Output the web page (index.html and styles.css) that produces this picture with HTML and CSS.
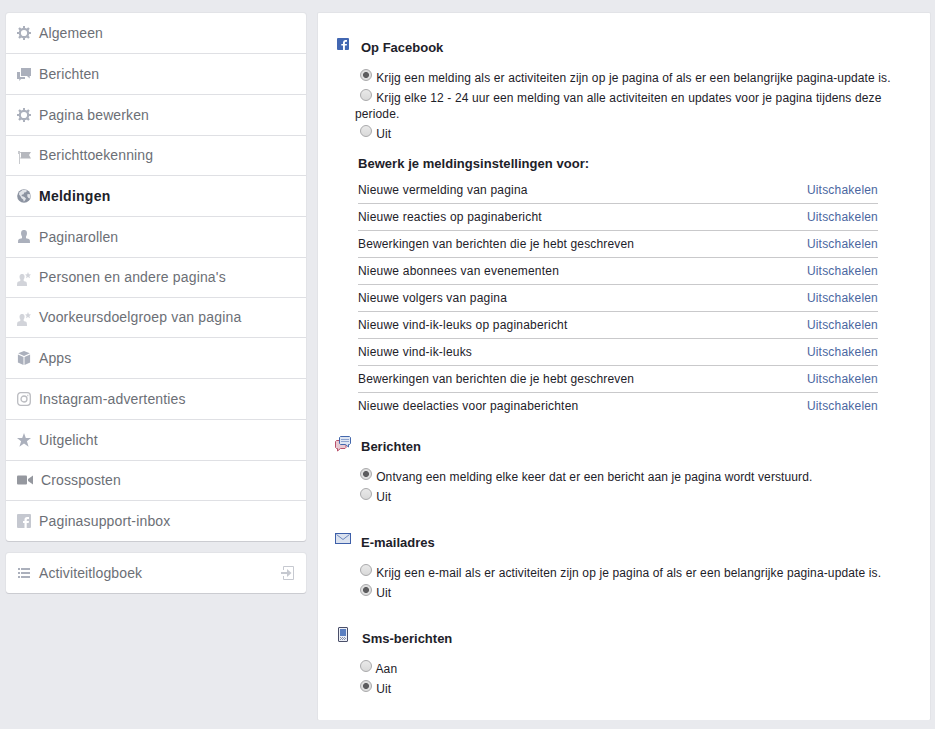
FILE: index.html
```html
<!DOCTYPE html>
<html lang="nl">
<head>
    <meta charset="UTF-8">
    <meta name="viewport" content="width=device-width, initial-scale=1.0">
    <title>Instellingen - Meldingen</title>
    <link rel="stylesheet" href="styles.css">
</head>
<body>
    <!-- shared icon shapes -->
    <svg class="sprite">
        <symbol id="gear" viewBox="0 0 14 14">
            <circle cx="7" cy="7" r="4.2" fill="none" stroke="currentColor" stroke-width="2.2"/>
            <path d="M6 0h2v2.5H6zM6 11.5h2V14H6zM0 6h2.5v2H0zM11.5 6H14v2h-2.5zM1.2 2.8l1.6-1.6 1.9 1.7L2.9 4.7zM12.8 2.8l-1.6-1.6L9.3 2.9 11.1 4.7zM1.2 11.2l1.6 1.6L4.7 11.1 2.9 9.3zM12.8 11.2l-1.6 1.6L9.3 11.1 11.1 9.3z"/>
        </symbol>
        <symbol id="person-star" viewBox="0 0 14 14">
            <path d="M4.200 2H6q1.600.5 1.600 2.500T6.700 7.300v1.800l2.400.7Q10 10.200 10 14H0q0-3.800.9-4.200l2.400-.7V7.300Q2.500 6.500 2.500 4.500T4.200 2z"/>
            <path d="M11 0l.9 2.300 2.100.1-1.600 1.500.6 2.300-2-1.300-2 1.300.6-2.300L8 2.400l2.100-.1z"/>
        </symbol>
    </svg>

    <div class="page">
        <div class="sidebar">
            <ul class="card menu">
                <li><svg class="icon" viewBox="0 0 14 14"><use href="#gear"/></svg>Algemeen</li>
                <li>
                    <svg class="icon" viewBox="0 0 14 14"><path d="M4 1h10v8h-1.300v2.500L10 9H4z"/><path d="M0 5h3v5h5v2H4l-1.700 2v-2H0z"/></svg>
                    Berichten
                </li>
                <li><svg class="icon" viewBox="0 0 14 14"><use href="#gear"/></svg>Pagina bewerken</li>
                <li class="short">
                    <svg class="icon flag" viewBox="0 0 14 14"><path d="M4 2h10l-2 3 2 3.500H4z"/><path d="M1 1h2v13H2V4H1zM3 2h1v1H3zM3 7.500h1v1H3z" opacity=".75"/></svg>
                    Berichttoekenning
                </li>
                <li class="active">
                    <svg class="icon" viewBox="0 0 14 14"><circle cx="7" cy="7" r="6.800"/><path class="land" d="M5.500 1l2.700-.3 2 1.100-1.400 1.500-1.600.3-.6 1.700-1.800.5-.2 1.300 2.500.6 1.900 1.800-.9 1.700-1.300 1.500-.6-2.100-1.700-1.400-1-2L2 5.500 2.200 3.600zM10.500 5l2.500.2.500 1.900-.6 2.400-1.500-.6-1.200-1.600z"/></svg>
                    Meldingen
                </li>
                <li>
                    <svg class="icon" viewBox="0 0 14 14"><path d="M6 0h2q2 .5 2 3.100Q10 5.300 9 6.400v1.800l3 .9q1.200.7 1 3.900H1q-.2-3.200 1-3.900l3-.9V6.400Q4 5.300 4 3.100 4 .5 6 0z"/></svg>
                    Paginarollen
                </li>
                <li class="short wide"><svg class="icon faded" viewBox="0 0 14 14"><use href="#person-star"/></svg>Personen en andere pagina's</li>
                <li class="short wide"><svg class="icon faded" viewBox="0 0 14 14"><use href="#person-star"/></svg>Voorkeursdoelgroep van pagina</li>
                <li>
                    <svg class="icon" viewBox="0 0 14 14"><path d="M7 0l5.800 2.300L7 5 1.200 2.300zM.9 3.400l5.600 2.500V14L.9 11.500zM13.100 3.400L7.500 5.900V14l5.600-2.500z"/></svg>
                    Apps
                </li>
                <li class="wide">
                    <svg class="icon line" viewBox="0 0 14 14"><rect x=".7" y=".7" width="12.600" height="12.600" rx="3"/><circle cx="7" cy="7" r="3"/><path d="M10.300 3.500h1"/></svg>
                    Instagram-advertenties
                </li>
                <li>
                    <svg class="icon" viewBox="0 0 14 14"><path d="M7 0l1.800 5H14L9.900 8.300l1.700 5.400L7 10.600l-4.600 3.100 1.700-5.400L0 5h5.200z"/></svg>
                    Uitgelicht
                </li>
                <li class="short">
                    <svg class="icon video" viewBox="0 0 16 14"><rect y="2.500" width="10" height="9" rx="1"/><path d="M16 2.500v9L11 8V6z"/></svg>
                    Crossposten
                </li>
                <li class="wide">
                    <svg class="icon fb" viewBox="0 0 14 14"><rect width="14" height="14" rx="1"/><path class="cut" d="M7.500 14V9H6V7h1.500V5.500Q7.500 3 10 3h2v2h-1.300q-1 0-1 1v1H12l-.3 2h-2v5z"/></svg>
                    Paginasupport-inbox
                </li>
            </ul>
            <ul class="card menu">
                <li>
                    <svg class="icon" viewBox="0 0 14 14"><path d="M1 2h2v2H1zM4 2h9v2H4zM1 6h2v2H1zM4 6h9v2H4zM1 10h2v2H1zM4 10h9v2H4z"/></svg>
                    Activiteitlogboek
                    <svg class="exit" viewBox="0 0 14 14"><path d="M2.500 4V.5h10v13h-10V10" fill="none" stroke="currentColor"/><path d="M0 6h6V3l4.500 4L6 11V8H0z"/></svg>
                </li>
            </ul>
        </div>

        <div class="card content">
            <div class="section">
                <div class="heading">
                    <svg width="12" height="12" viewBox="0 0 12 12"><rect width="12" height="12" rx="1" fill="#4267b2"/><path d="M6 12V7.500H4.300V6H6V4.500Q6 2 8.300 2H10v1.700H9q-1.100 0-1.100 1V6H10l-.3 1.500H7.900V12z" fill="#fff"/></svg>
                    <h3>Op Facebook</h3>
                </div>
                <div class="options">
                    <div><input type="radio" name="facebook" checked> Krijg een melding als er activiteiten zijn op je pagina of als er een belangrijke pagina-update is.</div>
                    <div><input type="radio" name="facebook"> Krijg elke 12 - 24 uur een melding van alle activiteiten en updates voor je pagina tijdens deze<br>periode.</div>
                    <div><input type="radio" name="facebook"> Uit</div>
                </div>
                <div class="settings">
                    <h4>Bewerk je meldingsinstellingen voor:</h4>
                    <div class="row"><span>Nieuwe vermelding van pagina</span><a>Uitschakelen</a></div>
                    <div class="row"><span>Nieuwe reacties op paginabericht</span><a>Uitschakelen</a></div>
                    <div class="row"><span class="tight">Bewerkingen van berichten die je hebt geschreven</span><a>Uitschakelen</a></div>
                    <div class="row"><span>Nieuwe abonnees van evenementen</span><a>Uitschakelen</a></div>
                    <div class="row"><span>Nieuwe volgers van pagina</span><a>Uitschakelen</a></div>
                    <div class="row"><span>Nieuwe vind-ik-leuks op paginabericht</span><a>Uitschakelen</a></div>
                    <div class="row"><span>Nieuwe vind-ik-leuks</span><a>Uitschakelen</a></div>
                    <div class="row"><span class="tight">Bewerkingen van berichten die je hebt geschreven</span><a>Uitschakelen</a></div>
                    <div class="row"><span>Nieuwe deelacties voor paginaberichten</span><a>Uitschakelen</a></div>
                </div>
            </div>

            <div class="section">
                <div class="heading messages">
                    <svg width="16" height="16" viewBox="0 0 16 16">
                        <path d="M1.500 4.500l-1 1v6l1 1h1v2.500l3-2.500H10l1-1v-7z" fill="#e8c9d2" stroke="#b8506a"/>
                        <path d="M5.500.5h9l1 1v6l-1 1h-1v2.500l-3-2.500h-5l-1-1v-6z" fill="#dfe6f3" stroke="#4468ad"/>
                        <path d="M6 3.500h8M6 5.500h8" stroke="#8fa5d0"/>
                    </svg>
                    <h3>Berichten</h3>
                </div>
                <div class="options">
                    <div><input type="radio" name="messages" checked> <span class="snug">Ontvang een melding elke keer dat er een bericht aan je pagina wordt verstuurd.</span></div>
                    <div><input type="radio" name="messages"> Uit</div>
                </div>
            </div>

            <div class="section">
                <div class="heading email">
                    <svg width="16" height="12" viewBox="0 0 16 12"><rect x=".5" y=".5" width="15" height="10" fill="#dbe2ef" stroke="#3d5fa9"/><path d="M1.500 1.500L8 6.500l6.500-5" fill="none" stroke="#6d88bd"/></svg>
                    <h3>E-mailadres</h3>
                </div>
                <div class="options">
                    <div><input type="radio" name="email"> Krijg een e-mail als er activiteiten zijn op je pagina of als er een belangrijke pagina-update is.</div>
                    <div><input type="radio" name="email" checked> Uit</div>
                </div>
            </div>

            <div class="section">
                <div class="heading sms">
                    <svg width="10" height="15" viewBox="0 0 10 15"><rect x=".5" y=".5" width="9" height="14" rx=".5" fill="#eceff6" stroke="#4a4f69"/><path d="M2 2h6v7H2z" fill="#5b7fc0"/><path d="M2 10.500h6M3 11.500h6M2 12.500h6" stroke="#8b93ab" stroke-dasharray="1 1"/></svg>
                    <h3>Sms-berichten</h3>
                </div>
                <div class="options">
                    <div><input type="radio" name="sms"> Aan</div>
                    <div><input type="radio" name="sms" checked> Uit</div>
                </div>
            </div>
        </div>
    </div>
</body>
</html>
```
FILE: styles.css
```css
* {
    box-sizing: border-box;
}

body {
    margin: 0;
    background-color: #e9eaee;
    font-family: "Liberation Sans", Arial, sans-serif;
    font-size: 12px;
    line-height: 16px;
    color: #1d2129;
}

h3, h4, ul {
    margin: 0;
    padding: 0;
}

.sprite {
    display: none;
}

.page {
    display: flex;
    align-items: flex-start;
    gap: 12px;
    padding: 13px 5px 0 6px;
}

.card {
    background-color: #fff;
    border-radius: 3px;
    box-shadow: 0 1px 0 #cbccd1, 0 0 0 1px #e2e3e7;
}

/* left menu */
.sidebar {
    width: 300px;
}

.menu {
    list-style: none;
    margin-bottom: 12px;
}

.menu li {
    display: flex;
    align-items: center;
    height: 41px;
    padding: 0 11px;
    border-bottom: 1px solid #dfe0e4;
    font-size: 14px;
    letter-spacing: 0.12px;
    color: #6c6f76;
}

.menu li.short {
    height: 40px;
    padding-bottom: 1px;
}

.menu li.wide {
    letter-spacing: 0.16px;
}

.menu li:last-child {
    height: 40px;
    border-bottom: none;
}

.menu li.active {
    font-weight: bold;
    letter-spacing: 0.25px;
    color: #1d2129;
}

.icon {
    width: 14px;
    height: 14px;
    margin-right: 8px;
    fill: currentColor;
    color: #abb0bc;
}

.icon.flag {
    margin-top: 3px;
    color: #b6b8be;
}

.icon.faded {
    margin-top: 3px;
    color: #d2d4da;
}

.icon.line {
    fill: none;
    stroke: #bbbcc1;
    stroke-width: 1.3;
}

.icon.video {
    width: 16px;
    color: #95989f;
}

.icon.fb {
    color: #c5c8d0;
}

.active .icon {
    color: #8c93a1;
}

.land, .cut {
    fill: #fff;
}

.active .land {
    fill: #e1e3e8;
}

.exit {
    width: 14px;
    height: 14px;
    margin-left: auto;
    fill: currentColor;
    color: #c6c9d0;
}

/* settings panel */
.content {
    width: 612px;
    height: 707px;
    padding: 27px 0 0 17px;
    border-radius: 1px;
}

.section {
    margin-bottom: 30px;
}

.section:first-child {
    margin-bottom: 20px;
}

.heading {
    display: flex;
    height: 16px;
    margin-bottom: 10px;
}

.heading svg {
    margin: -2px 12px 0 2px;
}

.heading.messages svg {
    margin: -3px 10px 0 0;
}

.heading.email svg {
    margin: -2px 10px 0 0;
}

.heading.sms svg {
    margin: -4px 14px 0 3px;
}

h3, h4 {
    font-size: 13px;
    line-height: 16px;
}

.options {
    margin-left: 20px;
    letter-spacing: 0.13px;
}

.options .snug {
    letter-spacing: 0.11px;
}

.options input {
    appearance: none;
    width: 12px;
    height: 12px;
    margin: 3px 0.7px 1px 5px;
    border: 1px solid #a9a9ab;
    border-radius: 50%;
    background: linear-gradient(#e9e9e9, #d9d9d9);
    vertical-align: baseline;
}

.options input:checked {
    background: radial-gradient(circle, #5c5c5e 2.6px, #dedede 3.4px);
}

.settings {
    width: 520px;
    margin: 14px 0 0 23px;
}

.settings h4 {
    margin-bottom: 5px;
    letter-spacing: 0.04px;
}

.row {
    display: flex;
    justify-content: space-between;
    padding: 5px 0;
    border-bottom: 1px solid #c9c9cb;
    letter-spacing: 0.2px;
}

.row:last-child {
    border-bottom: none;
}

.row .tight {
    letter-spacing: 0.15px;
}

.row a {
    color: #4a66a0;
}
```
